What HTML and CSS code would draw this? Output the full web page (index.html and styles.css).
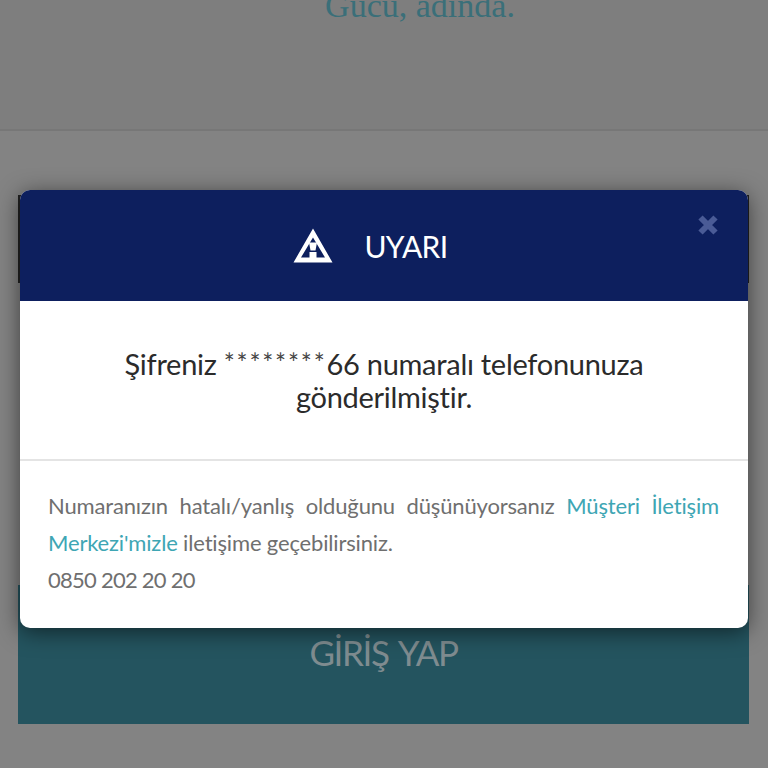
FILE: index.html
```html
<!DOCTYPE html>
<html lang="tr">
<head>
<meta charset="utf-8">
<title>Uyarı</title>
<link rel="stylesheet" href="styles.css">
</head>
<body>
<main class="page">
  <section class="hero"><p class="slogan">Gücü, adında.</p></section>
  <section class="form">
    <div class="field"></div>
    <div class="submit">GİRİŞ YAP</div>
  </section>
</main>
<div class="modal" role="dialog">
  <header class="modal-head">
    <svg class="warn" viewBox="0 0 40 35" aria-hidden="true">
      <path fill="#fff" fill-rule="evenodd" d="M20 .5 39.500 34.500H.5ZM20 9.500 8 29.500h24Z"/>
      <path fill="#fff" d="M16 14.500h8l-1.500 8h-5ZM16.500 24h7v6h-7Z"/>
    </svg>
    <h1 class="modal-title">UYARI</h1>
    <svg class="close" viewBox="0 0 22 22" aria-hidden="true">
      <path d="M3.500 3.500 18.500 18.500M18.500 3.500 3.500 18.500" stroke="#4a5b96" stroke-width="6"/>
    </svg>
  </header>
  <div class="modal-msg">Şifreniz <span class="stars">********</span>66 numaralı telefonunuza gönderilmiştir.</div>
  <div class="modal-note">
    <p class="note-just">Numaranızın hatalı/yanlış olduğunu düşünüyorsanız <a class="link">Müşteri İletişim Merkezi'mizle</a> iletişime geçebilirsiniz.</p>
    <p class="note-phone">0850 202 20 20</p>
  </div>
</div>
</body>
</html>
```

FILE: styles.css
```css
* { box-sizing: border-box; }
html, body { margin: 0; height: 768px; overflow: hidden; }
body { background: #838383; font-family: Lato, "Open Sans", sans-serif; position: relative; }
.page { display: flex; flex-direction: column; height: 768px; }
.hero { height: 131px; background: #7e7e7e; border-bottom: 2px solid #777; text-align: center; overflow: hidden; }
.slogan { margin: -15px 0 0 72px; font: 34px/42px "Liberation Serif", serif; color: #3a6f79; }
.form { flex: 1; padding: 64px 19px 44px 18px; display: flex; flex-direction: column; justify-content: space-between; }
.field { height: 88px; background: #222; }
.submit { height: 139px; background: #24545f; color: #7f8c90; font-size: 35px; line-height: 134px; letter-spacing: -1.4px; word-spacing: 3px; display: flex; justify-content: center; }
.modal { position: absolute; left: 20px; top: 190px; width: 728px; height: 438px; background: #fff; border-radius: 10px; overflow: hidden; box-shadow: 0 4px 22px rgba(0,0,0,.55); display: flex; flex-direction: column; }
.modal-head { height: 111px; background: #0d1f5e; display: flex; align-items: center; justify-content: center; gap: 31px; padding-right: 27px; position: relative; color: #fff; flex: none; }
.warn { width: 40px; height: 35px; }
.modal-title { margin: 0; font-size: 30px; font-weight: 400; letter-spacing: -.6px; }
.close { position: absolute; right: 29px; top: 24px; width: 22px; height: 22px; }
.modal-msg { height: 160px; padding: 46px 60px 0; text-align: center; font-size: 29px; line-height: 33px; letter-spacing: -.28px; color: #2b2b2b; border-bottom: 2px solid #e4e4e4; flex: none; }
.stars { font-size: 26px; line-height: 1; letter-spacing: 1.800px; color: #444; vertical-align: 2px; }
.modal-note { padding: 26px 29px 0 28px; font-size: 22px; line-height: 37px; letter-spacing: -.16px; color: #6f6f6f; }
.modal-note p { margin: 0; }
.note-just { text-align: justify; }
.note-phone { letter-spacing: -.75px; }
.link { color: #3ea6b4; }
```
